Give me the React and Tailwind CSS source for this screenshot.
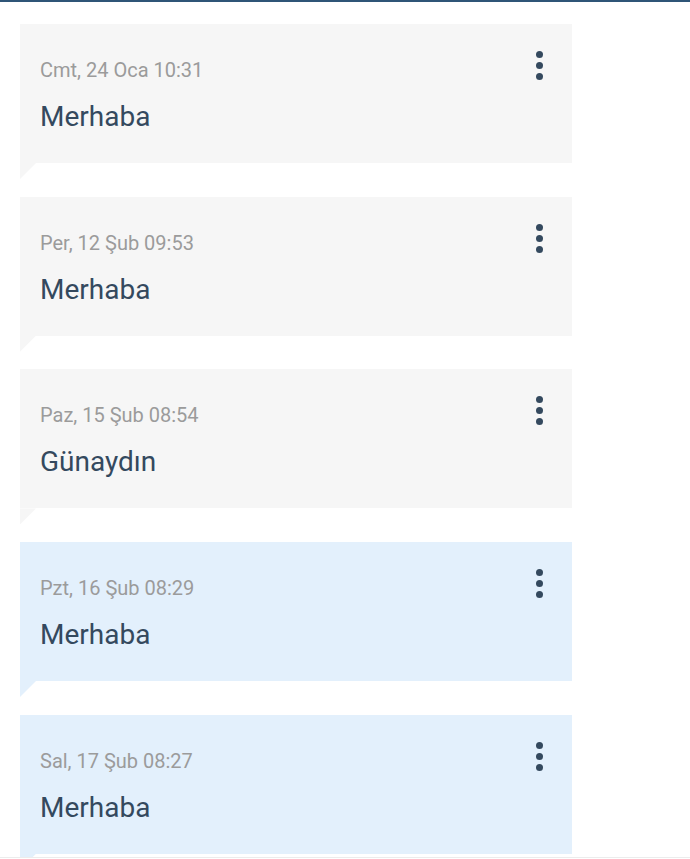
import React from "react";

const items = [
  { date: "Cmt, 24 Oca 10:31", text: "Merhaba", blue: false },
  { date: "Per, 12 Şub 09:53", text: "Merhaba", blue: false },
  { date: "Paz, 15 Şub 08:54", text: "Günaydın", blue: false },
  { date: "Pzt, 16 Şub 08:29", text: "Merhaba", blue: true },
  { date: "Sal, 17 Şub 08:27", text: "Merhaba", blue: true },
];

function Card({ date, text, blue }) {
  const bg = blue ? "bg-[#e3f0fc]" : "bg-[#f6f6f6]";
  return (
    <div className="flex flex-col">
      <div className={`flex h-[139px] w-[552px] ${bg}`}>
        <div className="flex flex-1 flex-col pl-5 pt-[34px]">
          <div className="text-[20px] leading-6 text-[#9b9b9b]">{date}</div>
          <div className="mt-[17px] text-[28px] leading-9 text-[#34495e]">{text}</div>
        </div>
        <div className="flex flex-col gap-[4px] pr-[29px] pt-[27px]">
          <span className="block h-[7px] w-[7px] rounded-full bg-[#34495e]" />
          <span className="block h-[7px] w-[7px] rounded-full bg-[#34495e]" />
          <span className="block h-[7px] w-[7px] rounded-full bg-[#34495e]" />
        </div>
      </div>
      <div className={`h-4 w-4 ${bg} [clip-path:polygon(0_0,100%_0,0_100%)]`} />
    </div>
  );
}

export default function App() {
  return (
    <div className="relative h-[859px] w-[690px] overflow-hidden bg-white font-['Roboto',sans-serif]">
      <div className="h-[2px] w-full bg-[#2f5577]" />
      <div className="flex flex-col gap-[17.7px] pl-5 pt-[22px]">
        {items.map((it, i) => (
          <Card key={i} {...it} />
        ))}
      </div>
      <div className="absolute bottom-0 left-0 h-[2px] w-full border-t border-[#ececec] bg-white" />
    </div>
  );
}
